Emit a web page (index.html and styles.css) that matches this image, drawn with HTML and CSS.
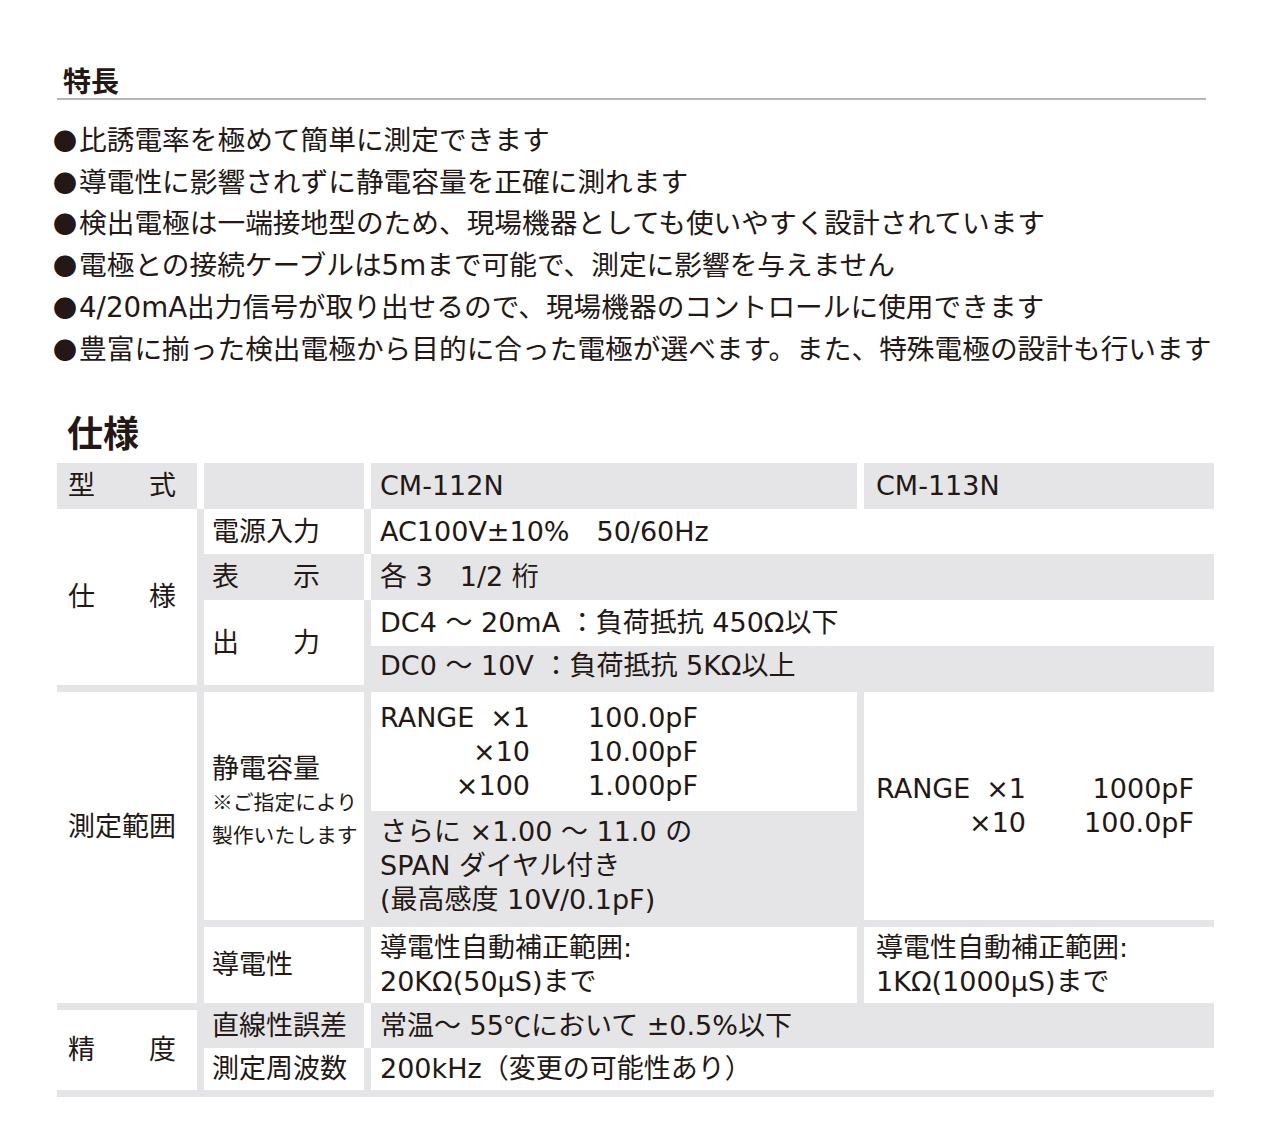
FILE: index.html
```html
<!DOCTYPE html>
<html lang="ja">
<head>
<meta charset="utf-8">
<title>特長・仕様</title>
<link rel="stylesheet" href="styles.css">
</head>
<body>
<div class="page">
  <h2 class="h-feat">特長</h2>
  <ul class="features">
    <li><span class="jp">●</span>比誘電率を極めて簡単に測定できます</li>
    <li><span class="jp">●</span>導電性に影響されずに静電容量を正確に測れます</li>
    <li><span class="jp">●</span>検出電極は一端接地型のため、現場機器としても使いやすく設計されています</li>
    <li><span class="jp">●</span>電極との接続ケーブルは5mまで可能で、測定に影響を与えません</li>
    <li><span class="jp">●</span>4/20mA出力信号が取り出せるので、現場機器のコントロールに使用できます</li>
    <li><span class="jp">●</span>豊富に揃った検出電極から目的に合った電極が選べます。また、特殊電極の設計も行います</li>
  </ul>

  <h2 class="h-spec">仕様</h2>
  <div class="spec">
    <div class="cell c1 gray bw r1">型　　式</div>
    <div class="cell c2 gray bw r1"></div>
    <div class="cell c3 gray bw r1">CM-112N</div>
    <div class="cell c4 gray r1">CM-113N</div>

    <div class="cell c1 white bg bbg s-shiyou">仕　　様</div>
    <div class="cell c2 white bg r2">電源入力</div>
    <div class="cell c34 white r2">AC100V±10%　50/60Hz</div>

    <div class="cell c2 gray bw r3">表　　示</div>
    <div class="cell c34 gray r3">各 3　1/2 桁</div>

    <div class="cell c2 white bg bbg s-out">出　　力</div>
    <div class="cell c34 white r4">DC4 ～ 20mA ：負荷抵抗 450Ω以下</div>
    <div class="cell c34 gray bbg r5">DC0 ～ 10V ：負荷抵抗 5KΩ以上</div>

    <div class="cell c1 white bg s-range">測定範囲</div>
    <div class="cell c2 white bg bbg s-cap">
      <div class="lines">
        <div class="cap">静電容量</div>
        <div class="note">※ご指定により</div>
        <div class="note">製作いたします</div>
      </div>
    </div>
    <div class="cell c3 white bg r6">
      <div class="rng">
        <div class="m"><span>RANGE</span><span>×1</span></div><div class="v">100.0pF</div>
        <div class="m"><span>×10</span></div><div class="v">10.00pF</div>
        <div class="m"><span>×100</span></div><div class="v">1.000pF</div>
      </div>
    </div>
    <div class="cell c3 gray bg bbg r7">
      <div class="lines">
        <div>さらに ×1.00 ～ 11.0 の</div>
        <div>SPAN ダイヤル付き</div>
        <div>(最高感度 10V/0.1pF)</div>
      </div>
    </div>
    <div class="cell c4 white bbg s-rng4">
      <div class="rng">
        <div class="m"><span>RANGE</span><span>×1</span></div><div class="v">1000pF</div>
        <div class="m"><span>×10</span></div><div class="v">100.0pF</div>
      </div>
    </div>

    <div class="cell c2 white bg r8">導電性</div>
    <div class="cell c3 white bg r8">
      <div class="lines">
        <div>導電性自動補正範囲:</div>
        <div>20KΩ(50µS)まで</div>
      </div>
    </div>
    <div class="cell c4 white r8">
      <div class="lines">
        <div>導電性自動補正範囲:</div>
        <div>1KΩ(1000µS)まで</div>
      </div>
    </div>

    <div class="cell c1 white bg btg bbg s-acc">精　　度</div>
    <div class="cell c2 gray bw r9">直線性誤差</div>
    <div class="cell c34 gray r9">常温～ 55<span class="jp">℃</span>において ±0.5%以下</div>
    <div class="cell c2 white bg bbg r10">測定周波数</div>
    <div class="cell c34 white bbg r10">200kHz（変更の可能性あり）</div>
  </div>
</div>
</body>
</html>
```

FILE: styles.css
```css
* { box-sizing: border-box; }

body {
  margin: 0;
  background: #ffffff;
  color: #231815;
  font-family: "DejaVu Sans", "Noto Sans CJK JP", sans-serif;
}

.jp {
  font-family: "Noto Sans CJK JP", sans-serif;
  line-height: 0;
}

.page {
  padding: 62px 0 40px 57px;
}

.h-feat {
  width: 1149px;
  margin: 0;
  padding-left: 6px;
  font-family: "Noto Sans CJK JP", sans-serif;
  font-size: 28px;
  font-weight: 700;
  line-height: 36px;
  border-bottom: 2px solid #b5b5b6;
}

.features {
  list-style: none;
  margin: 20px 0 0 -6px;
  padding: 0;
  font-size: 27.7px;
  line-height: 41.7px;
  white-space: nowrap;
}

.features .jp {
  display: inline-block;
  width: 28px;
  font-size: 24px;
  text-align: center;
}

.h-spec {
  margin: 39px 0 0;
  padding-left: 10px;
  font-family: "Noto Sans CJK JP", sans-serif;
  font-size: 36px;
  line-height: 44px;
  font-weight: 700;
}

.spec {
  margin-top: 10px;
  display: grid;
  grid-template-columns: 147px 167px 493px 350px;
  grid-template-rows: 46px 45px 46px 46px 46px 119px 116px 76px 45px 49px;
  font-size: 27px;
  line-height: 34px;
  white-space: nowrap;
}

.cell {
  display: flex;
  align-items: center;
  min-width: 0;
}

.gray { background: #e5e5e7; }
.white { background: #ffffff; }

.bw { border-right: 7px solid #ffffff; }
.bg { border-right: 7px solid #e5e5e7; }
.bbg { border-bottom: 7px solid #e5e5e7; }
.btg { border-top: 7px solid #e5e5e7; }

.c1 { grid-column: 1; padding-left: 11px; }
.c2 { grid-column: 2; padding-left: 8px; }
.c3 { grid-column: 3; padding-left: 9px; }
.c4 { grid-column: 4; padding-left: 12px; }
.c34 { grid-column: 3 / 5; padding-left: 9px; }

.r1 { grid-row: 1; }
.r2 { grid-row: 2; }
.r3 { grid-row: 3; }
.r4 { grid-row: 4; }
.r5 { grid-row: 5; }
.r6 { grid-row: 6; }
.r7 { grid-row: 7; }
.r8 { grid-row: 8; }
.r9 { grid-row: 9; }
.r10 { grid-row: 10; }

.s-shiyou { grid-row: 2 / 6; }
.s-out { grid-row: 4 / 6; }
.s-range { grid-row: 6 / 9; padding-bottom: 42px; }
.s-cap { grid-row: 6 / 8; padding-bottom: 10px; }
.s-rng4 { grid-row: 6 / 8; }
.s-acc { grid-row: 9 / 11; }

.lines { display: flex; flex-direction: column; }
.cap { line-height: 33px; }
.note {
  font-family: "Noto Sans CJK JP", sans-serif;
  font-size: 20.8px;
  line-height: 33px;
}

.rng {
  display: grid;
  grid-template-columns: 150px 168px;
  line-height: 34px;
}
.rng .m {
  display: flex;
  justify-content: space-between;
}
.rng .m span:only-child { margin-left: auto; }
.rng .v { text-align: right; }
```
